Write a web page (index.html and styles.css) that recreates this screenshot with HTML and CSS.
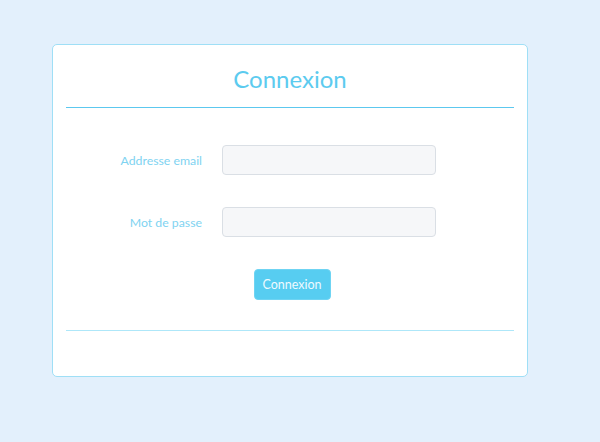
FILE: index.html
```html
<!DOCTYPE html>
<html lang="fr">
<head>
<meta charset="utf-8">
<title>Connexion</title>
<link rel="stylesheet" href="styles.css">
</head>
<body>
<div class="card">
  <div class="card-header">
    <h1 class="title">Connexion</h1>
  </div>
  <form class="card-body">
    <div class="fields">
      <label class="label" for="email">Addresse email</label>
      <input class="input" id="email" type="email">
      <label class="label" for="pwd">Mot de passe</label>
      <input class="input" id="pwd" type="password">
    </div>
    <div class="actions">
      <button class="btn" type="button">Connexion</button>
    </div>
  </form>
  <div class="card-footer"></div>
</div>
</body>
</html>
```
FILE: styles.css
```css
html, body {
  margin: 0;
  padding: 0;
}
body {
  background: #e3f0fc;
  font-family: Lato, "Noto Sans", sans-serif;
  height: 442px;
  padding: 44px 0 0 52px;
  box-sizing: border-box;
}
.card {
  width: 476px;
  height: 333px;
  box-sizing: border-box;
  background: #ffffff;
  border: 1px solid #9fdff6;
  border-radius: 5px;
  padding: 0 13px;
  display: flex;
  flex-direction: column;
}
.card-header {
  padding-top: 17px;
  border-bottom: 1px solid #5cc8ef;
  padding-bottom: 12px;
}
.title {
  margin: 0;
  text-align: center;
  font-weight: 400;
  font-size: 24px;
  line-height: 33px;
  color: #5ccbef;
}
.card-body {
  margin: 0;
  padding: 37px 0 30px;
  display: flex;
  flex-direction: column;
  gap: 32px;
  border-bottom: 1px solid #aee7f9;
}
.fields {
  display: grid;
  grid-template-columns: 136px 214px;
  column-gap: 20px;
  row-gap: 32px;
  align-items: center;
}
.label {
  text-align: right;
  font-size: 12.3px;
  color: #80d3f1;
}
.input {
  width: 214px;
  height: 30px;
  box-sizing: border-box;
  margin: 0;
  background: #f6f7f9;
  border: 1px solid #dadfe5;
  border-radius: 4px;
}
.actions {
  display: flex;
  justify-content: center;
  padding-left: 4px;
}
.btn {
  width: 77px;
  height: 31px;
  border: 1px solid #6fd4f3;
  border-radius: 4px;
  background: #57cdf1;
  color: #eefaff;
  font-family: Lato, "Noto Sans", sans-serif;
  font-size: 12.5px;
  padding: 0;
}
.card-footer {
  flex: 1;
}
```
